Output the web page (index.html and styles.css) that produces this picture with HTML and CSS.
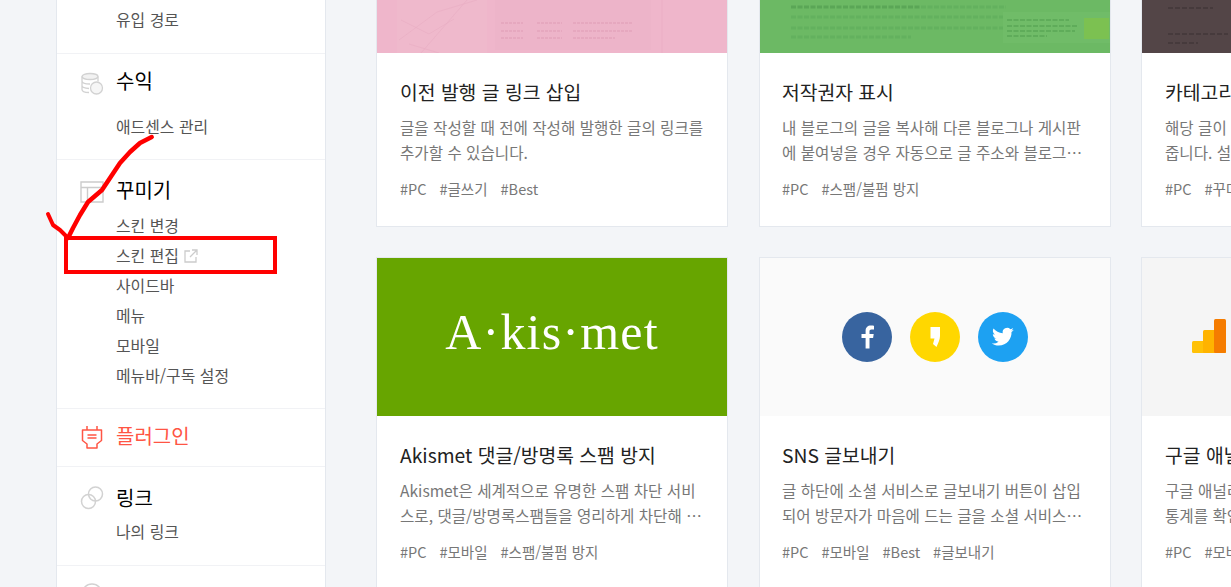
FILE: index.html
```html
<!DOCTYPE html>
<html lang="ko">
<head>
<meta charset="utf-8">
<title>플러그인</title>
<link rel="stylesheet" href="styles.css">
</head>
<body>
<div class="page">
  <nav class="side">
    <section class="group first">
      <ul class="items"><li>유입 경로</li></ul>
    </section>
    <section class="group income">
      <h3 class="head">
        <svg class="ico" viewBox="0 0 24 24" fill="none" stroke="#d2d2d2" stroke-width="1.300"><ellipse cx="10" cy="4.500" rx="8" ry="3" fill="#f2f2f2"/><path d="M2 4.500v13c0 1.700 3 3 7 3M18 4.500v5M2 9c0 1.700 3 3 8 3M2 13.500c0 1.700 3 2.800 7 3"/><circle cx="16.500" cy="16" r="6" fill="#f6f6f6"/></svg>
        수익
      </h3>
      <ul class="items"><li>애드센스 관리</li></ul>
    </section>
    <section class="group deco">
      <h3 class="head">
        <svg class="ico" viewBox="0 0 24 24" fill="none" stroke="#ccc" stroke-width="1.400"><path d="M1 2h22v20H1zM1 7.500h22M7.500 7.500V22"/></svg>
        꾸미기
      </h3>
      <ul class="items">
        <li>스킨 변경</li>
        <li>스킨 편집 <svg class="ext" viewBox="0 0 14 14" fill="none" stroke="#ccc" stroke-width="1.300"><path d="M6 2H1v11h11V8M8 1h5v5M13 1 6 8"/></svg></li>
        <li>사이드바</li>
        <li>메뉴</li>
        <li>모바일</li>
        <li>메뉴바/구독 설정</li>
      </ul>
    </section>
    <section class="group plugin">
      <h3 class="head on">
        <svg class="ico" viewBox="0 0 24 24" fill="none" stroke="#ff5544" stroke-width="1.500" stroke-linejoin="round"><path d="M7 1v4M17 1v4M2.500 5h19v10.500l-4.500 3.500v4H7v-4l-4.500-3.500zM7.500 10h9M7.500 13h9"/></svg>
        플러그인
      </h3>
    </section>
    <section class="group link">
      <h3 class="head">
        <svg class="ico" viewBox="0 0 24 24" fill="none" stroke="#d2d2d2" stroke-width="1.500"><circle cx="8.500" cy="15.500" r="7"/><circle cx="15.500" cy="8" r="7"/></svg>
        링크
      </h3>
      <ul class="items"><li>나의 링크</li></ul>
    </section>
    <section class="group last">
      <svg class="ico" viewBox="0 0 24 24" fill="none" stroke="#d2d2d2" stroke-width="1.500"><circle cx="12" cy="12" r="10"/></svg>
    </section>
  </nav>

  <main class="grid">
    <article class="card top">
      <div class="thumb pink">
        <svg class="soft" viewBox="0 0 350 53" preserveAspectRatio="none" fill="none" stroke="#e8adc3" stroke-width=".6"><rect x="20" y="0" width="90" height="53" fill="#efb9cc" stroke="none"/><rect x="118" y="0" width="156" height="50" fill="#edb4c9" stroke="none"/><path d="M22 40 60 12 100 0M44 53 90 0M24 20l28 14 25-15M32 44l30 9"/><path d="M124 23h22M160 23h25M196 23h60M124 31h22M160 31h25M196 31h60M124 38h22M160 38h25M196 38h42" stroke="#e6a8bf" stroke-width="2" stroke-dasharray="3 1"/><path d="M285 0v53"/></svg>
      </div>
      <div class="body">
        <h2>이전 발행 글 링크 삽입</h2>
        <p>글을 작성할 때 전에 작성해 발행한 글의 링크를<br>추가할 수 있습니다.</p>
        <div class="tags"><span>#PC</span><span>#글쓰기</span><span>#Best</span></div>
      </div>
    </article>
    <article class="card top">
      <div class="thumb green">
        <svg class="soft" viewBox="0 0 350 53" preserveAspectRatio="none" fill="none" stroke="#63b15e" stroke-width="3" stroke-dasharray="5 1.500"><path d="M31 7h130" stroke="#5aa656"/><path d="M161 7h85M31 17h225M31 28h225M31 37h120"/><rect x="243" y="12" width="107" height="31" fill="#70bc68" stroke="none"/><path d="M247 20h62M247 26h70M247 31h68M247 36h40" stroke="#5aa656" stroke-width="1.500"/><rect x="324" y="18" width="25" height="21" fill="#7cc151" stroke="none"/></svg>
      </div>
      <div class="body">
        <h2>저작권자 표시</h2>
        <p>내 블로그의 글을 복사해 다른 블로그나 게시판<br>에 붙여넣을 경우 자동으로 글 주소와 블로그…</p>
        <div class="tags"><span>#PC</span><span>#스팸/불펌 방지</span></div>
      </div>
    </article>
    <article class="card top">
      <div class="thumb brown">
        <svg class="soft" viewBox="0 0 350 53" preserveAspectRatio="none" fill="none" stroke="#463a3c" stroke-width="2" stroke-dasharray="5 2"><path d="M26 8h45M26 34h60M26 43h30"/></svg>
      </div>
      <div class="body">
        <h2>카테고리 글 더 보기</h2>
        <p>해당 글이 속한 카테고리의 글 목록을 보여<br>줍니다. 설정에 따라 글 목록이 표시됩니다.</p>
        <div class="tags"><span>#PC</span><span>#꾸미기</span></div>
      </div>
    </article>

    <article class="card">
      <div class="thumb akismet"><span class="logo">A·kis·met</span></div>
      <div class="body">
        <h2>Akismet 댓글/방명록 스팸 방지</h2>
        <p>Akismet은 세계적으로 유명한 스팸 차단 서비<br>스로, 댓글/방명록스팸들을 영리하게 차단해 …</p>
        <div class="tags"><span>#PC</span><span>#모바일</span><span>#스팸/불펌 방지</span></div>
      </div>
    </article>
    <article class="card">
      <div class="thumb sns">
        <svg class="round" viewBox="0 0 50 50"><circle cx="25" cy="25" r="25" fill="#38649f"/><path fill="#fff" d="M27.500 36.500V26h3.600l.6-4h-4.200v-2.600c0-1.200.4-2 2.100-2H32v-3.700c-.5-.1-1.700-.2-3.100-.2-3.200 0-5.300 1.900-5.300 5.500V22H19.500v4h4.100v10.500z"/></svg>
        <svg class="round" viewBox="0 0 50 50"><circle cx="25" cy="25" r="25" fill="#ffd700"/><path fill="#fff" d="M20.500 15h9.500v9c0 3.500-2 7.500-3.500 11l-3.500-3 1.500-5.500h-4z"/></svg>
        <svg class="round" viewBox="0 0 50 50"><circle cx="25" cy="25" r="25" fill="#1da1f2"/><path fill="#fff" transform="translate(3.500 3.800) scale(.85)" d="M38 16.500c-1 .4-2 .7-3 .8 1.100-.7 1.900-1.700 2.300-2.900-1 .6-2.100 1-3.300 1.300a5.300 5.300 0 0 0-9 4.800c-4.400-.2-8.300-2.300-10.900-5.500-1.400 2.400-.7 5.500 1.600 7-.9 0-1.700-.3-2.400-.7 0 2.600 1.800 4.800 4.300 5.300-.8.200-1.600.2-2.400.1.700 2.100 2.600 3.600 4.900 3.700A10.700 10.700 0 0 1 12 32.500c2.400 1.500 5.200 2.400 8.200 2.400 9.900 0 15.500-8.400 15.100-15.900 1.100-.7 2-1.600 2.700-2.500z"/></svg>
      </div>
      <div class="body">
        <h2>SNS 글보내기</h2>
        <p>글 하단에 소셜 서비스로 글보내기 버튼이 삽입<br>되어 방문자가 마음에 드는 글을 소셜 서비스…</p>
        <div class="tags"><span>#PC</span><span>#모바일</span><span>#Best</span><span>#글보내기</span></div>
      </div>
    </article>
    <article class="card">
      <div class="thumb ga">
        <svg class="gaicon" viewBox="0 0 34 34"><rect x="0" y="22" width="34" height="12" rx="1.500" fill="#ffc107"/><rect x="11" y="11" width="23" height="23" rx="1.500" fill="#ffb300"/><rect x="22" y="0" width="12" height="34" rx="1.500" fill="#f57c00"/></svg>
      </div>
      <div class="body">
        <h2>구글 애널리틱스</h2>
        <p>구글 애널리틱스 서비스를 연결해 블로그<br>통계를 확인할 수 있습니다.</p>
        <div class="tags"><span>#PC</span><span>#모바일</span></div>
      </div>
    </article>
  </main>
</div>

<svg class="marks" viewBox="0 0 1231 587" fill="none" stroke="#f00" stroke-linecap="round" stroke-linejoin="round">
  <rect x="66" y="238" width="209" height="34" stroke-width="4" stroke-linejoin="miter"/>
  <path d="M151.700 137 140 143l-10 9-10 11-8 12-10 15-14 12-8 13-7 13-5 10" stroke-width="4.500"/>
  <path d="M48 214l5 11 7 5 7 7" stroke-width="4"/>
</svg>
</body>
</html>
```

FILE: styles.css
```css
* { box-sizing: border-box; }
html, body { margin: 0; height: 100%; overflow: hidden; }
body {
  position: relative;
  background: #f3f5f8;
  color: #555;
  font-family: "Noto Sans CJK KR", "Noto Sans", sans-serif;
}
.page { display: flex; align-items: flex-start; padding-left: 56px; height: 587px; overflow: hidden; }

.side {
  flex: 0 0 270px;
  background: #fff;
  border-left: 1px solid #e4e8ee;
  border-right: 1px solid #e4e8ee;
}
.group { border-bottom: 1px solid #f1f2f5; padding-left: 59px; position: relative; }
.first { height: 54px; padding-top: 5px; }
.income { height: 106px; padding-top: 12px; }
.deco { height: 249px; padding-top: 15px; }
.plugin { height: 58px; padding-top: 12px; }
.link { height: 99px; padding-top: 16px; }
.last { height: 40px; border-bottom: 0; padding-top: 16px; }
.last .ico { left: 23px; top: 16px; }

.head {
  margin: 0;
  height: 30px;
  font-size: 20px;
  line-height: 30px;
  font-weight: 400;
  color: #000;
}
.head.on { color: #ff5544; }
.ico { position: absolute; left: 23px; width: 24px; height: 24px; }
.income .ico { top: 18px; }
.deco .ico { top: 20px; }
.plugin .ico { top: 16px; }
.link .ico { top: 19px; }

.items { list-style: none; margin: 0; padding: 0; font-size: 15.900px; line-height: 30px; color: #555; }
.income .items { margin-top: 16px; }
.link .items { margin-top: 4px; }
.deco .items { margin-top: 6px; }
.ext { width: 14px; height: 14px; margin-left: 1px; vertical-align: -1px; }

.grid {
  flex: none;
  display: grid;
  grid-template-columns: 383px 382px 352px;
  row-gap: 30px;
  margin-left: 50px;
  width: 1120px;
}
.card {
  width: 352px;
  background: #fff;
  border: 1px solid #e4e8ee;
  border-top: 0;
  overflow: hidden;
}
.card.top { height: 227px; }
.thumb { height: 158px; display: flex; align-items: center; justify-content: center; gap: 18px; }
.top .thumb { height: 53px; }
.thumb > svg:only-child { width: 100%; height: 100%; display: block; }
.thumb > svg.soft { filter: blur(.6px); }
.pink { background: #efb6cb; }
.green { background: #6cb964; }
.brown { background: #534547; }
.akismet { background: #67a500; padding-bottom: 10px; }
.sns { background: #fafafa; }
.ga { background: #f5f5f5; justify-content: flex-start; padding-left: 50px; padding-bottom: 2px; }
.thumb > svg.gaicon { width: 34px; height: 34px; flex: none; }
.round { width: 50px; height: 50px; flex: none; }
.logo {
  font-family: "Liberation Serif", serif;
  font-size: 50px;
  line-height: 1;
  color: #fff;
  letter-spacing: 1.2px;
}

.card:nth-child(n+4) { border-top: 1px solid #e4e8ee; height: 360px; }
.body { padding: 23px 23px 0 23px; }
.card:nth-child(3n+2) .body { padding-left: 22px; }
.body h2 {
  margin: 0;
  font-size: 19.300px;
  line-height: 32px;
  font-weight: 400;
  color: #222;
  white-space: nowrap;
}
.body p {
  margin: 7px 0 0;
  font-size: 15.600px;
  line-height: 25px;
  color: #777;
  white-space: nowrap;
}
.tags { display: flex; gap: 13px; margin-top: 12px; font-size: 14.500px; line-height: 24px; color: #777; white-space: nowrap; }

.marks { position: absolute; left: 0; top: 0; width: 1231px; height: 587px; pointer-events: none; }
```
